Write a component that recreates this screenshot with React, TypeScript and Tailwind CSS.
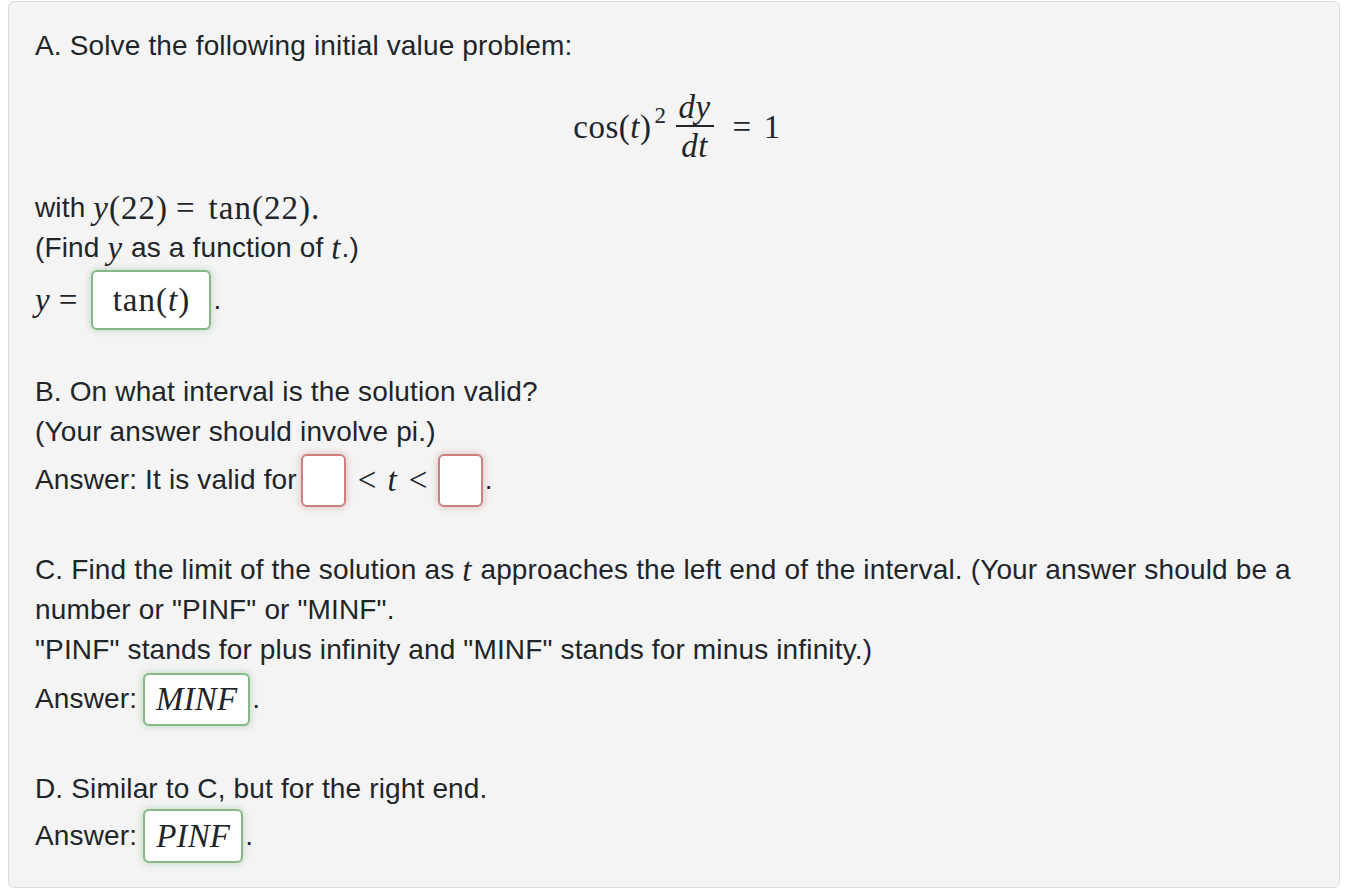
const sans = "font-['Liberation_Sans',Arial,sans-serif]";
const serif = "font-['Liberation_Serif','Times_New_Roman',serif]";

function M({ children, italic = false }: { children: React.ReactNode; italic?: boolean }) {
  return <span className={`${serif} ${italic ? "italic" : ""} text-[33px] tracking-[1px]`}>{children}</span>;
}

function AnswerBox({
  children,
  state,
  className = "",
}: {
  children?: React.ReactNode;
  state: "ok" | "bad";
  className?: string;
}) {
  const tone =
    state === "ok"
      ? "border-[#86b886] shadow-[0_0_7px_1px_rgba(110,170,110,0.35)]"
      : "border-[#cc8080] shadow-[0_0_7px_1px_rgba(200,110,110,0.35)]";
  return (
    <span
      className={`inline-flex items-center justify-center rounded-[6px] border-2 bg-white ${tone} ${className}`}
    >
      {children}
    </span>
  );
}

function Line({ children, className = "" }: { children: React.ReactNode; className?: string }) {
  return <div className={`flex h-[40px] items-center whitespace-pre ${className}`}>{children}</div>;
}

export default function App() {
  return (
    <div className={`${sans} bg-white text-[28px] leading-[40px] tracking-[0.15px] text-[#212529]`}>
      <div className="ml-[8px] mt-[1px] h-[887px] w-[1332px] rounded-[6px] border border-[#dddddd] bg-[#f4f4f4] pl-[26px] pt-[24px]">
        {/* A */}
        <Line>A. Solve the following initial value problem:</Line>
        <div className="flex h-[122px] items-center justify-center pl-[6px] pr-[26px]">
          <div className={`${serif} flex items-center text-[33px] tracking-[0.5px]`}>
            <span>
              cos(<span className="italic">t</span>)
            </span>
            <span className="relative top-[-11px] ml-[3px] text-[23px]">2</span>
            <span className="ml-[8px] inline-flex flex-col items-center">
              <span className="px-[4px] italic leading-[36px]">dy</span>
              <span className="h-[1.5px] w-[38px] bg-[#212529]" />
              <span className="px-[4px] italic leading-[38px]">dt</span>
            </span>
            <span className="ml-[18px]">=</span>
            <span className="ml-[12px]">1</span>
          </div>
        </div>
        <Line>
          <span>with </span>
          <M>
            <i>y</i>(22)
          </M>
          <M>
            <span className="ml-[8px]">=</span>
          </M>
          <M>
            <span className="ml-[13px]">tan(22).</span>
          </M>
        </Line>
        <Line>
          (Find <M italic>y</M> as a function of <M italic>t</M>.)
        </Line>
        <div className="flex h-[64px] items-center">
          <M italic>y</M>
          <span className={`${serif} ml-[8px] text-[33px]`}>=</span>
          <AnswerBox state="ok" className="ml-[14px] h-[60px] w-[120px]">
            <M>
              tan(<i>t</i>)
            </M>
          </AnswerBox>
          <span className="ml-[2px]">.</span>
        </div>

        {/* B */}
        <Line className="mt-[40px]">B. On what interval is the solution valid?</Line>
        <Line>(Your answer should involve pi.)</Line>
        <div className="flex h-[56px] items-center">
          <span>Answer: It is valid for</span>
          <AnswerBox state="bad" className="ml-[4px] h-[53px] w-[45px]" />
          <span className={`${serif} ml-[12px] text-[33px]`}>&lt;</span>
          <span className={`${serif} ml-[11px] text-[33px] italic`}>t</span>
          <span className={`${serif} ml-[12px] text-[33px]`}>&lt;</span>
          <AnswerBox state="bad" className="ml-[10px] h-[53px] w-[45px]" />
          <span className="ml-[2px]">.</span>
        </div>

        {/* C */}
        <Line className="mt-[42px]">
          C. Find the limit of the solution as <M italic>t</M> approaches the left end of the interval. (Your answer
          should be a
        </Line>
        <Line>number or "PINF" or "MINF".</Line>
        <Line>"PINF" stands for plus infinity and "MINF" stands for minus infinity.)</Line>
        <div className="flex h-[58px] items-center">
          <span>Answer:</span>
          <AnswerBox state="ok" className="ml-[6px] h-[53px] w-[107px]">
            <span className={`${serif} text-[33px] italic`}>MINF</span>
          </AnswerBox>
          <span className="ml-[2px]">.</span>
        </div>

        {/* D */}
        <Line className="mt-[41px]">D. Similar to C, but for the right end.</Line>
        <div className="flex h-[54px] items-center">
          <span>Answer:</span>
          <AnswerBox state="ok" className="ml-[6px] h-[54px] w-[100px]">
            <span className={`${serif} text-[33px] italic`}>PINF</span>
          </AnswerBox>
          <span className="ml-[2px]">.</span>
        </div>
      </div>
    </div>
  );
}
